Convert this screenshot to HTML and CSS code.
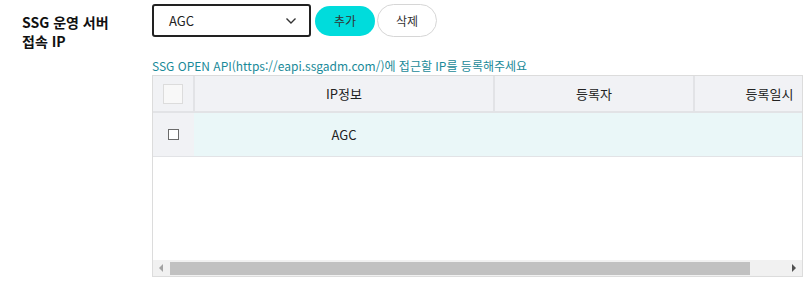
FILE: index.html
```html
<!DOCTYPE html>
<html lang="ko">
<head>
  <meta charset="UTF-8">
  <title>SSG 운영 서버 접속 IP</title>
  <link rel="stylesheet" href="styles.css">
</head>
<body>
  <div class="form-row">
    <div class="form-label">SSG 운영 서버<br>접속 IP</div>
    <div class="form-field">
      <div class="controls">
        <div class="select-box">
          <span>AGC</span>
          <svg class="chevron" width="12" height="8" viewBox="0 0 12 8">
            <path d="M1.5 1.5 L6 6 L10.5 1.5" fill="none" stroke="#333" stroke-width="1.4"/>
          </svg>
        </div>
        <button class="btn btn-add">추가</button>
        <button class="btn btn-del">삭제</button>
      </div>
      <p class="help">SSG OPEN API(https://eapi.ssgadm.com/)에 접근할 IP를 등록해주세요</p>
      <div class="grid-wrap">
        <div class="grid-view">
          <table class="grid">
            <colgroup>
              <col class="c-chk">
              <col class="c-ip">
              <col class="c-user">
              <col class="c-date">
            </colgroup>
            <thead>
              <tr>
                <th><span class="head-chk"></span></th>
                <th>IP정보</th>
                <th>등록자</th>
                <th>등록일시</th>
              </tr>
            </thead>
            <tbody>
              <tr class="selected">
                <td class="chk-cell"><span class="row-chk"></span></td>
                <td>AGC</td>
                <td></td>
                <td></td>
              </tr>
            </tbody>
          </table>
        </div>
        <div class="hscroll">
          <span class="arrow arrow-left"></span>
          <div class="track"><div class="thumb"></div></div>
          <span class="arrow arrow-right"></span>
        </div>
      </div>
    </div>
  </div>
</body>
</html>
```

FILE: styles.css
```css
body {
  margin: 0;
  font-family: "Noto Sans CJK KR", "Noto Sans", sans-serif;
  color: #222;
  background: #fff;
}

.form-row {
  display: flex;
}

.form-label {
  flex-shrink: 0;
  width: 152px;
  padding: 13px 0 0 22px;
  box-sizing: border-box;
  font-size: 14px;
  font-weight: bold;
  line-height: 19px;
  color: #111;
}

.form-field {
  padding-top: 4px;
}

.controls {
  display: flex;
  align-items: center;
  gap: 4px;
}

.select-box {
  width: 159px;
  height: 33px;
  box-sizing: border-box;
  border: 2px solid #222;
  border-radius: 3px;
  display: flex;
  align-items: center;
  justify-content: space-between;
  padding: 0 12px 0 15px;
  font-size: 13px;
}

.btn {
  width: 60px;
  border-radius: 17px;
  font-family: inherit;
  font-size: 12px;
  color: #333;
  cursor: pointer;
}

.btn-add {
  height: 30px;
  border: none;
  background: #00dcdc;
}

.btn-del {
  height: 33px;
  border: 1px solid #d6d6d6;
  background: #fff;
  margin-left: -2px;
}

.help {
  margin: 21px 0 0;
  font-size: 12px;
  line-height: 16px;
  color: #1a8a99;
}

.grid-wrap {
  margin-top: 1px;
  width: 651px;
  height: 202px;
  box-sizing: border-box;
  border: 1px solid #dcdcdc;
  display: flex;
  flex-direction: column;
}

.grid-view {
  flex: 1;
  overflow: hidden;
}

.grid {
  border-collapse: collapse;
  table-layout: fixed;
  width: 691px;
  font-size: 13px;
}

.c-chk { width: 41px; }
.c-ip { width: 300px; }
.c-user { width: 200px; }
.c-date { width: 150px; }

.grid th {
  height: 35px;
  background: #f1f2f5;
  font-weight: normal;
  border-left: 2px solid #e2e3e6;
  border-bottom: 2px solid #e2e3e6;
  padding: 0;
}

.grid th:first-child {
  border-left: none;
}

.head-chk {
  display: block;
  width: 18px;
  height: 18px;
  margin: 0 auto 0 10px;
  border: 1px solid #dcdcdc;
  background: #f8f8f8;
}

.grid td {
  height: 43px;
  text-align: center;
  padding: 0;
  border-bottom: 1px solid #e2e3e6;
}

.selected td {
  background: #eaf7f8;
}

.selected td.chk-cell {
  background: #f1f2f5;
}

.row-chk {
  display: block;
  width: 9px;
  height: 9px;
  margin: 0 0 0 15px;
  border: 1px solid #6b6b6b;
  background: #fff;
}

/* horizontal scrollbar */
.hscroll {
  height: 16px;
  display: flex;
  background: #f1f1f1;
}

.arrow {
  width: 17px;
  position: relative;
}

.arrow::after {
  content: "";
  position: absolute;
  top: 4px;
  width: 0;
  height: 0;
  border-top: 4px solid transparent;
  border-bottom: 4px solid transparent;
}

.arrow-left::after {
  left: 6px;
  border-right: 4px solid #a3a3a3;
}

.arrow-right::after {
  left: 7px;
  border-left: 4px solid #505050;
}

.track {
  flex: 1;
  padding: 1px 0;
}

.thumb {
  width: 580px;
  height: 13px;
  margin-top: 1px;
  background: #c1c1c1;
}
```
